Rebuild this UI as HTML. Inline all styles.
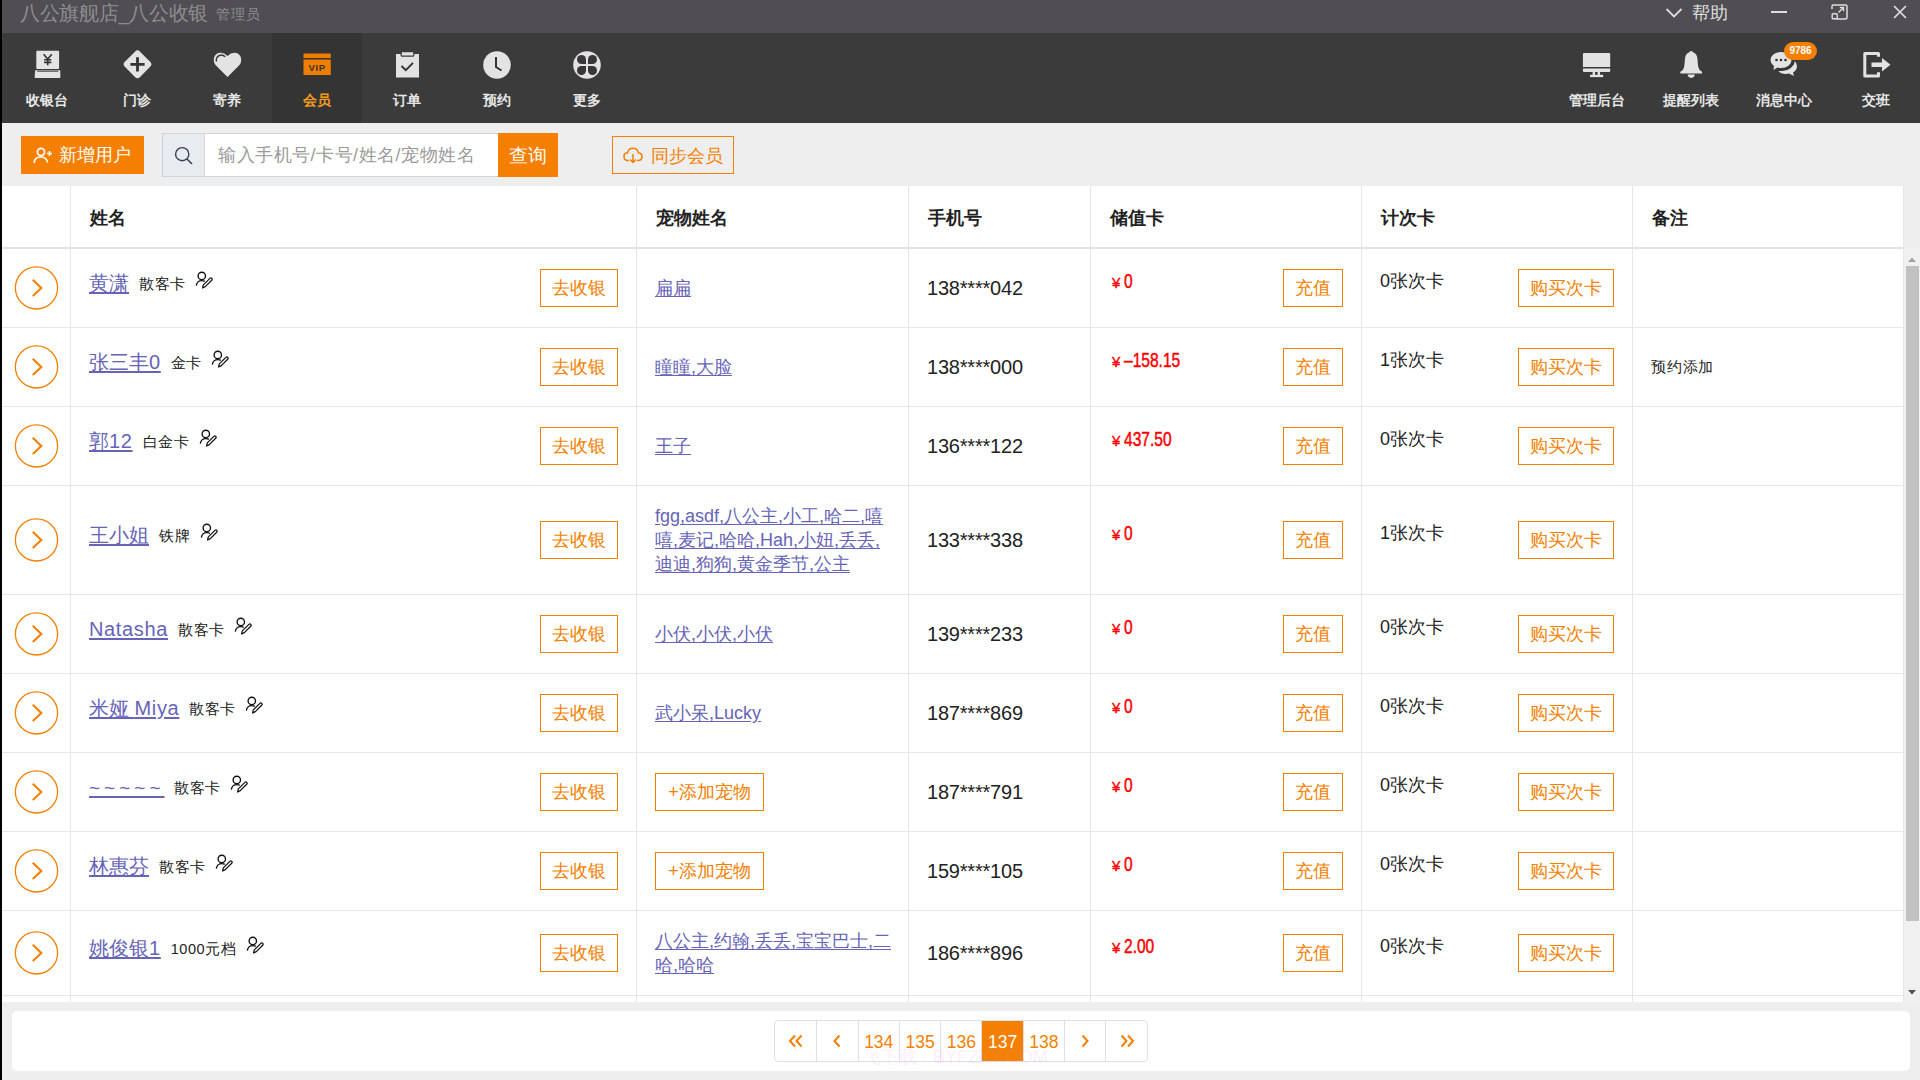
<!DOCTYPE html>
<html><head><meta charset="utf-8"><style>
*{box-sizing:border-box;margin:0;padding:0}
html,body{width:1920px;height:1080px;overflow:hidden;background:#eeeeee;font-family:"Liberation Sans",sans-serif;position:relative}
.abs{position:absolute}
#lb{position:absolute;left:0;top:0;width:2px;height:1080px;background:#000;z-index:10}
#title{position:absolute;left:0;top:0;width:1920px;height:33px;background:#504d53}
#title .t1{position:absolute;left:20px;top:2px;font-size:20px;line-height:22px;color:#8d8d8f;white-space:nowrap;letter-spacing:-0.3px}
#title .t2{position:absolute;left:216px;top:6px;font-size:14px;line-height:16px;color:#8d8d8f;letter-spacing:1px}
#nav{position:absolute;left:0;top:33px;width:1920px;height:90px;background:#3b3b3b}
.nav-item{position:absolute;top:0;width:90px;height:90px}
.nav-item.active{background:#343434}
.nic{position:absolute;left:50%;top:17px;width:30px;height:30px;margin-left:-15px}
.nic svg{display:block}
.nlab{position:absolute;left:0;right:0;top:59px;text-align:center;font-size:14px;line-height:16px;font-weight:bold;color:#e6e6e6;white-space:nowrap}
.active .nlab{color:#f39a1e}
.badge{position:absolute;left:1784px;top:8.5px;width:33px;height:18.5px;border-radius:9px;background:#f47f00;color:#fff;font-size:10px;font-weight:bold;line-height:18.5px;text-align:center}
.tb-btn{position:absolute;top:136px;height:38px;background:#f47f00;color:#fff;font-size:18px;line-height:38px}
#search{position:absolute;left:162px;top:133px;width:336px;height:44px;background:#fff;border:1px solid #cfd4dc;border-right:none}
#search .ic{position:absolute;left:0;top:0;width:42px;height:42px;background:#e8ebef;border-right:1px solid #d3d8de}
#search .ph{position:absolute;left:55px;top:10px;font-size:18px;line-height:22px;color:#9a9a9a;white-space:nowrap;letter-spacing:0.5px}
#qbtn{position:absolute;left:498px;top:133px;width:60px;height:44px;background:#f47f00;color:#fff;font-size:18.5px;line-height:46px;text-align:center}
#sync{position:absolute;left:612px;top:136px;width:122px;height:38px;border:1px solid #f47f00;color:#f47f00;font-size:18px;line-height:36px}
#table{position:absolute;left:2px;top:186px;width:1902px;height:816px;background:#fff;overflow:hidden;border-right:1px solid #e3e6eb}
#thead{position:absolute;left:0;top:0;width:1901px;height:63px;border-bottom:2px solid #dfe3e8}
.th{position:absolute;top:21px;margin-left:1px;font-size:18px;line-height:22px;font-weight:bold;color:#222}
.vl{position:absolute;top:0;width:1px;height:816px;background:#e3e6eb}
#tbody{position:absolute;left:0;top:63px;width:1901px;height:753px}
.row{position:absolute;left:0;width:1901px;border-bottom:1px solid #e3e6eb}
.circ{position:absolute;left:0}
.nm{position:absolute;left:87px;height:38px;white-space:nowrap}
.lk{color:#6663b8;text-decoration:underline;text-underline-offset:2px}
.nmlink{font-size:20px;line-height:24px;position:relative;top:2px}
.lt{letter-spacing:0.65px}
.tilde{letter-spacing:4px;font-size:19px}
.card{font-size:14.5px;letter-spacing:0.5px;color:#222;margin-left:10px;position:relative;top:1px}
.pi{position:relative;top:-4px;margin-left:9.5px;vertical-align:middle}
.btn{position:absolute;height:38px;border:1px solid #f47f00;color:#f47f00;font-size:18px;line-height:36px;text-align:center;background:#fff}
.b1{left:538px;width:78px}
.b2{left:1281px;width:60px}
.b3{left:1516px;width:96px}
.addpet{left:653px;width:109px}
.pets{position:absolute;left:653px;font-size:18px;line-height:24px;white-space:nowrap}
.phone{position:absolute;left:925px;font-size:20px;line-height:24px;color:#222;letter-spacing:-0.2px}
.amt{position:absolute;left:1109px;height:38px;color:#f00;white-space:nowrap}
.yen{position:absolute;left:1px;top:6.3px;font-size:15px;line-height:15px;-webkit-text-stroke:0.35px #f00}
.num{position:absolute;left:12.5px;top:1.3px;font-size:21px;line-height:21px;-webkit-text-stroke:0.5px #f00;transform:scaleX(0.74);transform-origin:0 50%;white-space:nowrap}
.times{position:absolute;left:1378px;font-size:18px;line-height:24px;color:#222;white-space:nowrap}
.note{position:absolute;left:1649px;font-size:15px;line-height:24px;color:#222;letter-spacing:0.8px}
#sb{position:absolute;left:1904px;top:248px;width:16px;height:754px;background:#f0f0f0}
#sb .thumb{position:absolute;left:2px;top:18px;width:13px;height:655px;background:#c1c1c1}
#pgwrap{position:absolute;left:12px;top:1011px;width:1898px;height:60px;background:#fff;border-radius:5px}
#pager{position:absolute;left:774px;top:1020px;height:42px;border:1px solid #dcdfe6;border-radius:4px;display:flex;background:#fff;overflow:hidden}
#pager div{width:41.3px;height:40px;border-left:1px solid #dcdfe6;color:#f47f00;font-size:17.5px;line-height:42px;text-align:center}
#pager svg{vertical-align:middle;position:relative;top:-2px}
#wm{position:absolute;left:863px;top:1046px;font-size:18px;line-height:22px;color:rgba(240,150,240,0.18);white-space:nowrap;letter-spacing:0px}
#pager div:first-child{border-left:none}
#pager div.cur{background:#f47f00;color:#fff}
</style></head><body>
<div id="title"><div class="t1">八公旗舰店_八公收银</div><div class="t2">管理员</div>
<svg class="abs" style="left:1665px;top:7px" width="18" height="12" viewBox="0 0 18 12"><path d="M1.5 2 L9 9.5 L16.5 2" stroke="#dedede" stroke-width="1.8" fill="none"/></svg>
<div class="abs" style="left:1692px;top:3px;font-size:18px;line-height:20px;color:#dedede">帮助</div>
<div class="abs" style="left:1771px;top:11px;width:16px;height:2px;background:#dedede"></div>
<svg class="abs" style="left:1831px;top:4px" width="17" height="16" viewBox="0 0 17 16"><path d="M5 1 H14.5 Q16 1 16 2.5 V13.5 Q16 15 14.5 15 H5" stroke="#dedede" stroke-width="1.5" fill="none"/><path d="M1 5 V2.5 Q1 1 2.5 1 H5" stroke="#dedede" stroke-width="1.5" fill="none"/><rect x="1.2" y="9.8" width="5" height="5" rx="0.8" stroke="#dedede" stroke-width="1.4" fill="none"/><path d="M7.5 8.5 L12.5 3.5 M8.8 3.5 H12.5 V7.2" stroke="#dedede" stroke-width="1.4" fill="none"/></svg>
<svg class="abs" style="left:1893px;top:5px" width="14" height="14" viewBox="0 0 14 14"><path d="M1 1 L13 13 M13 1 L1 13" stroke="#dedede" stroke-width="1.7"/></svg>
</div>
<div id="nav">
<div class="nav-item" style="left:2px"><div class="nic"><svg width="30" height="30" viewBox="0 0 30 30"><rect x="4.3" y="0.8" width="22.8" height="18.2" rx="1" fill="#e3e3e3"/><path d="M11.6 4.3 L15.7 9 L19.8 4.3 M15.7 9 V15.3 M12.1 9.8 H19.3 M12.1 12.4 H19.3" stroke="#333" stroke-width="1.6" fill="none"/><path d="M3.2 20.2 H28.2 L28.4 27.2 Q28.4 28 27.6 28 H3.4 Q2.6 28 2.6 27.2 Z" fill="#e3e3e3"/><rect x="5.2" y="20.6" width="21" height="1.2" fill="#555"/></svg></div><div class="nlab">收银台</div></div>
<div class="nav-item" style="left:92px"><div class="nic"><svg width="30" height="30" viewBox="0 0 30 30"><rect x="4.75" y="3.55" width="21.5" height="21.5" rx="3.6" transform="rotate(45 15.5 14.3)" fill="#e3e3e3"/><path d="M15.5 7.2 V21.4 M8.4 14.3 H22.6" stroke="#333" stroke-width="2.8" fill="none"/></svg></div><div class="nlab">门诊</div></div>
<div class="nav-item" style="left:182px"><div class="nic"><svg width="30" height="30" viewBox="0 0 30 30"><path d="M15.5 26.9 L4 15.6 Q1.2 12.4 1.9 8.2 Q3 3.2 8 2.7 Q12 2.4 15.5 5.9 Q19 2.4 23 2.7 Q28 3.2 29.1 8.2 Q29.8 12.4 27 15.6 Z" fill="#e3e3e3"/><path d="M4.4 11.6 Q3.8 7.2 7.2 5.5 Q10.4 4.2 13.2 6.8" stroke="#383838" stroke-width="1.4" fill="none"/></svg></div><div class="nlab">寄养</div></div>
<div class="nav-item active" style="left:272px"><div class="nic"><svg width="30" height="30" viewBox="0 0 30 30"><rect x="1.5" y="3.5" width="27.3" height="4.5" rx="0.6" fill="#ef7d00"/><rect x="1.5" y="9.5" width="27.3" height="15.5" rx="0.6" fill="#ef7d00"/><text x="15.1" y="21" text-anchor="middle" font-family="Liberation Sans" font-size="9.5" font-weight="bold" fill="#3d3530" letter-spacing="0.6">VIP</text></svg></div><div class="nlab">会员</div></div>
<div class="nav-item" style="left:362px"><div class="nic"><svg width="30" height="30" viewBox="0 0 30 30"><rect x="4" y="4" width="23" height="23.5" fill="#e3e3e3"/><rect x="9.2" y="1.6" width="12.6" height="4.6" rx="0.8" fill="#e3e3e3" stroke="#3b3b3b" stroke-width="1.2"/><path d="M9.5 16 L13.8 20.2 L21 12.8" stroke="#333" stroke-width="1.9" fill="none"/></svg></div><div class="nlab">订单</div></div>
<div class="nav-item" style="left:452px"><div class="nic"><svg width="30" height="30" viewBox="0 0 30 30"><circle cx="15" cy="15" r="13.8" fill="#e3e3e3"/><path d="M14 7 V17 L19.5 20.5" stroke="#333" stroke-width="2" fill="none"/></svg></div><div class="nlab">预约</div></div>
<div class="nav-item" style="left:542px"><div class="nic"><svg width="30" height="30" viewBox="0 0 30 30"><circle cx="15" cy="15" r="13.8" fill="#e3e3e3"/><g fill="#3a363a"><path d="M14 14 H9.5 A4.5 4.5 0 1 1 14 9.5 Z"/><path d="M16 14 H20.5 A4.5 4.5 0 1 0 16 9.5 Z"/><path d="M14 16 H9.5 A4.5 4.5 0 1 0 14 20.5 Z"/><path d="M16 16 H20.5 A4.5 4.5 0 1 1 16 20.5 Z"/></g></svg></div><div class="nlab">更多</div></div>
<div class="nav-item" style="left:1550.5px;width:93px"><div class="nic"><svg width="30" height="30" viewBox="0 0 30 30"><path d="M0.9 4 Q0.9 2.9 2 2.9 H27.1 Q28.2 2.9 28.2 4 V17 H0.9 Z" fill="#e3e3e3"/><path d="M0.9 18.6 H28.2 V21 Q28.2 22 27.1 22 H2 Q0.9 22 0.9 21 Z" fill="#e3e3e3"/><rect x="10.6" y="22" width="2.4" height="3" fill="#e3e3e3"/><rect x="15.6" y="22" width="2.4" height="3" fill="#e3e3e3"/><rect x="8" y="24.8" width="13.2" height="2.3" fill="#e3e3e3"/></svg></div><div class="nlab">管理后台</div></div>
<div class="nav-item" style="left:1644.0px;width:93px"><div class="nic"><svg width="30" height="30" viewBox="0 0 30 30"><circle cx="15.2" cy="2.9" r="1.9" fill="#e3e3e3"/><path d="M15.2 2 Q9.6 2 8.9 9 Q8.6 16 7.6 18.6 Q6.6 20.8 4.3 21.8 V23.6 H26.1 V21.8 Q23.8 20.8 22.8 18.6 Q21.8 16 21.5 9 Q20.8 2 15.2 2 Z" fill="#e3e3e3"/><path d="M11.6 24.6 Q12 27.9 15.2 27.9 Q18.4 27.9 18.8 24.6 Z" fill="#e3e3e3"/></svg></div><div class="nlab">提醒列表</div></div>
<div class="nav-item" style="left:1737.0px;width:93px"><div class="nic"><svg width="30" height="30" viewBox="0 0 30 30"><ellipse cx="12" cy="10" rx="10.5" ry="8" fill="#e3e3e3"/><path d="M5 15 L4.5 20 L10 16.5 Z" fill="#e3e3e3"/><path d="M25 10.5 Q28 13 28 16 Q28 20 24 22.5 L25 26 L20 23.6 Q18.5 24 17 24 Q11.5 24 9 20.5 Q18 21 22 17 Q25 14 25 10.5 Z" fill="#e3e3e3"/><path d="M9 20 Q17.5 21.2 22.3 16.6 Q25.2 13.6 25.2 10.2" stroke="#333" stroke-width="1.4" fill="none"/><circle cx="7.5" cy="10" r="1.3" fill="#333"/><circle cx="12" cy="10" r="1.3" fill="#333"/><circle cx="16.5" cy="10" r="1.3" fill="#333"/></svg></div><div class="nlab">消息中心</div></div>
<div class="nav-item" style="left:1829.0px;width:93px"><div class="nic"><svg width="30" height="30" viewBox="0 0 30 30"><path d="M17.5 6.8 V3.5 H3.8 V26 H17.5 V22.2" stroke="#e3e3e3" stroke-width="3" fill="none" stroke-linejoin="round"/><path d="M10.5 12.6 H21 V8 L29.5 14.8 L21 21.6 V17 H10.5 Z" fill="#e3e3e3"/></svg></div><div class="nlab">交班</div></div>
<div class="badge">9786</div>
</div>
<div class="tb-btn" style="left:21px;width:123px"><svg class="abs" style="left:12px;top:11px" width="20" height="17" viewBox="0 0 20 17"><circle cx="8" cy="5" r="3.6" stroke="#fff" stroke-width="1.7" fill="none"/><path d="M1.2 16 Q1.2 10 8 10 Q13.5 10 14.6 15.5" stroke="#fff" stroke-width="1.7" fill="none"/><path d="M14 6.5 H19 M16.5 4 V9" stroke="#fff" stroke-width="1.5"/></svg><span class="abs" style="left:38px;top:0">新增用户</span></div>
<div id="search"><div class="ic"><svg class="abs" style="left:10.5px;top:12px" width="20" height="20" viewBox="0 0 20 20"><circle cx="8.2" cy="8.2" r="6.6" stroke="#34405a" stroke-width="1.4" fill="none"/><path d="M13 13 L18 18" stroke="#34405a" stroke-width="1.6"/></svg></div><div class="ph">输入手机号/卡号/姓名/宠物姓名</div></div>
<div id="qbtn">查询</div>
<div id="sync"><svg class="abs" style="left:10px;top:10px" width="20" height="17" viewBox="0 0 20 17"><path d="M6 13.5 H5 Q1 13.5 1 9.5 Q1 6 4.5 5.8 Q5.5 1.2 10 1.2 Q14.5 1.2 15.3 5.8 Q19 6 19 9.8 Q19 13.5 15 13.5 H14" stroke="#f47f00" stroke-width="1.5" fill="none"/><path d="M10 7 V15.5 M7 12.5 L10 15.5 L13 12.5" stroke="#f47f00" stroke-width="1.5" fill="none"/></svg><span class="abs" style="left:38px;top:1px">同步会员</span></div>
<div id="table">
<div id="thead">
<div class="th" style="left:87px">姓名</div>
<div class="th" style="left:653px">宠物姓名</div>
<div class="th" style="left:925px">手机号</div>
<div class="th" style="left:1107px">储值卡</div>
<div class="th" style="left:1378px">计次卡</div>
<div class="th" style="left:1649px">备注</div>
</div>
<div id="tbody">
<div class="row" style="top:0px;height:79px">
<svg class="circ" style="top:9px" width="60" height="60" viewBox="0 0 60 60"><circle cx="34.5" cy="29.9" r="21.1" fill="none" stroke="#f47f00" stroke-width="1.3"/><path d="M30.8 21.8 L39.3 30 L30.8 38" fill="none" stroke="#f47f00" stroke-width="2.1"/></svg>
<div class="nm" style="top:20.0px"><a class="lk nmlink">黄潇</a><span class="card">散客卡</span><svg class="pi" width="18" height="18" viewBox="0 0 18 18"><circle cx="6.8" cy="4.9" r="3.7" fill="none" stroke="#111" stroke-width="1.35"/><path d="M1.3 14.6 C1.8 11.2 4 9.6 6.8 9.6 C8 9.6 9 9.9 9.8 10.4" fill="none" stroke="#111" stroke-width="1.35"/><path d="M7.6 17 L8.3 13.9 L14.9 7.4 Q15.9 6.5 16.8 7.4 Q17.6 8.3 16.7 9.2 L10.3 15.6 Z" fill="none" stroke="#111" stroke-width="1.25" stroke-linejoin="round"/></svg></div>
<div class="btn b1" style="top:20.0px">去收银</div>
<div class="pets" style="top:27.0px"><a class="lk">扁扁</a></div>
<div class="phone" style="top:27.0px">138****042</div>
<div class="amt" style="top:20.0px"><span class="yen">¥</span><span class="num">0</span></div>
<div class="btn b2" style="top:20.0px">充值</div>
<div class="times" style="top:20.0px">0张次卡</div>
<div class="btn b3" style="top:20.0px">购买次卡</div>
</div>
<div class="row" style="top:79px;height:79px">
<svg class="circ" style="top:9px" width="60" height="60" viewBox="0 0 60 60"><circle cx="34.5" cy="29.9" r="21.1" fill="none" stroke="#f47f00" stroke-width="1.3"/><path d="M30.8 21.8 L39.3 30 L30.8 38" fill="none" stroke="#f47f00" stroke-width="2.1"/></svg>
<div class="nm" style="top:20.0px"><a class="lk nmlink">张三丰<span class="lt">0</span></a><span class="card">金卡</span><svg class="pi" width="18" height="18" viewBox="0 0 18 18"><circle cx="6.8" cy="4.9" r="3.7" fill="none" stroke="#111" stroke-width="1.35"/><path d="M1.3 14.6 C1.8 11.2 4 9.6 6.8 9.6 C8 9.6 9 9.9 9.8 10.4" fill="none" stroke="#111" stroke-width="1.35"/><path d="M7.6 17 L8.3 13.9 L14.9 7.4 Q15.9 6.5 16.8 7.4 Q17.6 8.3 16.7 9.2 L10.3 15.6 Z" fill="none" stroke="#111" stroke-width="1.25" stroke-linejoin="round"/></svg></div>
<div class="btn b1" style="top:20.0px">去收银</div>
<div class="pets" style="top:27.0px"><a class="lk">瞳瞳,大脸</a></div>
<div class="phone" style="top:27.0px">138****000</div>
<div class="amt" style="top:20.0px"><span class="yen">¥</span><span class="num">–158.15</span></div>
<div class="btn b2" style="top:20.0px">充值</div>
<div class="times" style="top:20.0px">1张次卡</div>
<div class="btn b3" style="top:20.0px">购买次卡</div>
<div class="note" style="top:27.0px">预约添加</div>
</div>
<div class="row" style="top:158px;height:79px">
<svg class="circ" style="top:9px" width="60" height="60" viewBox="0 0 60 60"><circle cx="34.5" cy="29.9" r="21.1" fill="none" stroke="#f47f00" stroke-width="1.3"/><path d="M30.8 21.8 L39.3 30 L30.8 38" fill="none" stroke="#f47f00" stroke-width="2.1"/></svg>
<div class="nm" style="top:20.0px"><a class="lk nmlink">郭<span class="lt">12</span></a><span class="card">白金卡</span><svg class="pi" width="18" height="18" viewBox="0 0 18 18"><circle cx="6.8" cy="4.9" r="3.7" fill="none" stroke="#111" stroke-width="1.35"/><path d="M1.3 14.6 C1.8 11.2 4 9.6 6.8 9.6 C8 9.6 9 9.9 9.8 10.4" fill="none" stroke="#111" stroke-width="1.35"/><path d="M7.6 17 L8.3 13.9 L14.9 7.4 Q15.9 6.5 16.8 7.4 Q17.6 8.3 16.7 9.2 L10.3 15.6 Z" fill="none" stroke="#111" stroke-width="1.25" stroke-linejoin="round"/></svg></div>
<div class="btn b1" style="top:20.0px">去收银</div>
<div class="pets" style="top:27.0px"><a class="lk">王子</a></div>
<div class="phone" style="top:27.0px">136****122</div>
<div class="amt" style="top:20.0px"><span class="yen">¥</span><span class="num">437.50</span></div>
<div class="btn b2" style="top:20.0px">充值</div>
<div class="times" style="top:20.0px">0张次卡</div>
<div class="btn b3" style="top:20.0px">购买次卡</div>
</div>
<div class="row" style="top:237px;height:109px">
<svg class="circ" style="top:24px" width="60" height="60" viewBox="0 0 60 60"><circle cx="34.5" cy="29.9" r="21.1" fill="none" stroke="#f47f00" stroke-width="1.3"/><path d="M30.8 21.8 L39.3 30 L30.8 38" fill="none" stroke="#f47f00" stroke-width="2.1"/></svg>
<div class="nm" style="top:35.0px"><a class="lk nmlink">王小姐</a><span class="card">铁牌</span><svg class="pi" width="18" height="18" viewBox="0 0 18 18"><circle cx="6.8" cy="4.9" r="3.7" fill="none" stroke="#111" stroke-width="1.35"/><path d="M1.3 14.6 C1.8 11.2 4 9.6 6.8 9.6 C8 9.6 9 9.9 9.8 10.4" fill="none" stroke="#111" stroke-width="1.35"/><path d="M7.6 17 L8.3 13.9 L14.9 7.4 Q15.9 6.5 16.8 7.4 Q17.6 8.3 16.7 9.2 L10.3 15.6 Z" fill="none" stroke="#111" stroke-width="1.25" stroke-linejoin="round"/></svg></div>
<div class="btn b1" style="top:35.0px">去收银</div>
<div class="pets" style="top:18.0px"><a class="lk">fgg,asdf,八公主,小工,哈二,嘻</a><br><a class="lk">嘻,麦记,哈哈,Hah,小妞,丢丢,</a><br><a class="lk">迪迪,狗狗,黄金季节,公主</a></div>
<div class="phone" style="top:42.0px">133****338</div>
<div class="amt" style="top:35.0px"><span class="yen">¥</span><span class="num">0</span></div>
<div class="btn b2" style="top:35.0px">充值</div>
<div class="times" style="top:35.0px">1张次卡</div>
<div class="btn b3" style="top:35.0px">购买次卡</div>
</div>
<div class="row" style="top:346px;height:79px">
<svg class="circ" style="top:9px" width="60" height="60" viewBox="0 0 60 60"><circle cx="34.5" cy="29.9" r="21.1" fill="none" stroke="#f47f00" stroke-width="1.3"/><path d="M30.8 21.8 L39.3 30 L30.8 38" fill="none" stroke="#f47f00" stroke-width="2.1"/></svg>
<div class="nm" style="top:20.0px"><a class="lk nmlink"><span class="lt">Natasha</span></a><span class="card">散客卡</span><svg class="pi" width="18" height="18" viewBox="0 0 18 18"><circle cx="6.8" cy="4.9" r="3.7" fill="none" stroke="#111" stroke-width="1.35"/><path d="M1.3 14.6 C1.8 11.2 4 9.6 6.8 9.6 C8 9.6 9 9.9 9.8 10.4" fill="none" stroke="#111" stroke-width="1.35"/><path d="M7.6 17 L8.3 13.9 L14.9 7.4 Q15.9 6.5 16.8 7.4 Q17.6 8.3 16.7 9.2 L10.3 15.6 Z" fill="none" stroke="#111" stroke-width="1.25" stroke-linejoin="round"/></svg></div>
<div class="btn b1" style="top:20.0px">去收银</div>
<div class="pets" style="top:27.0px"><a class="lk">小伏,小伏,小伏</a></div>
<div class="phone" style="top:27.0px">139****233</div>
<div class="amt" style="top:20.0px"><span class="yen">¥</span><span class="num">0</span></div>
<div class="btn b2" style="top:20.0px">充值</div>
<div class="times" style="top:20.0px">0张次卡</div>
<div class="btn b3" style="top:20.0px">购买次卡</div>
</div>
<div class="row" style="top:425px;height:79px">
<svg class="circ" style="top:9px" width="60" height="60" viewBox="0 0 60 60"><circle cx="34.5" cy="29.9" r="21.1" fill="none" stroke="#f47f00" stroke-width="1.3"/><path d="M30.8 21.8 L39.3 30 L30.8 38" fill="none" stroke="#f47f00" stroke-width="2.1"/></svg>
<div class="nm" style="top:20.0px"><a class="lk nmlink">米娅 <span class="lt">Miya</span></a><span class="card">散客卡</span><svg class="pi" width="18" height="18" viewBox="0 0 18 18"><circle cx="6.8" cy="4.9" r="3.7" fill="none" stroke="#111" stroke-width="1.35"/><path d="M1.3 14.6 C1.8 11.2 4 9.6 6.8 9.6 C8 9.6 9 9.9 9.8 10.4" fill="none" stroke="#111" stroke-width="1.35"/><path d="M7.6 17 L8.3 13.9 L14.9 7.4 Q15.9 6.5 16.8 7.4 Q17.6 8.3 16.7 9.2 L10.3 15.6 Z" fill="none" stroke="#111" stroke-width="1.25" stroke-linejoin="round"/></svg></div>
<div class="btn b1" style="top:20.0px">去收银</div>
<div class="pets" style="top:27.0px"><a class="lk">武小呆,Lucky</a></div>
<div class="phone" style="top:27.0px">187****869</div>
<div class="amt" style="top:20.0px"><span class="yen">¥</span><span class="num">0</span></div>
<div class="btn b2" style="top:20.0px">充值</div>
<div class="times" style="top:20.0px">0张次卡</div>
<div class="btn b3" style="top:20.0px">购买次卡</div>
</div>
<div class="row" style="top:504px;height:79px">
<svg class="circ" style="top:9px" width="60" height="60" viewBox="0 0 60 60"><circle cx="34.5" cy="29.9" r="21.1" fill="none" stroke="#f47f00" stroke-width="1.3"/><path d="M30.8 21.8 L39.3 30 L30.8 38" fill="none" stroke="#f47f00" stroke-width="2.1"/></svg>
<div class="nm" style="top:20.0px"><a class="lk nmlink"><span class="tilde">~~~~~</span></a><span class="card">散客卡</span><svg class="pi" width="18" height="18" viewBox="0 0 18 18"><circle cx="6.8" cy="4.9" r="3.7" fill="none" stroke="#111" stroke-width="1.35"/><path d="M1.3 14.6 C1.8 11.2 4 9.6 6.8 9.6 C8 9.6 9 9.9 9.8 10.4" fill="none" stroke="#111" stroke-width="1.35"/><path d="M7.6 17 L8.3 13.9 L14.9 7.4 Q15.9 6.5 16.8 7.4 Q17.6 8.3 16.7 9.2 L10.3 15.6 Z" fill="none" stroke="#111" stroke-width="1.25" stroke-linejoin="round"/></svg></div>
<div class="btn b1" style="top:20.0px">去收银</div>
<div class="btn addpet" style="top:20.0px">+添加宠物</div>
<div class="phone" style="top:27.0px">187****791</div>
<div class="amt" style="top:20.0px"><span class="yen">¥</span><span class="num">0</span></div>
<div class="btn b2" style="top:20.0px">充值</div>
<div class="times" style="top:20.0px">0张次卡</div>
<div class="btn b3" style="top:20.0px">购买次卡</div>
</div>
<div class="row" style="top:583px;height:79px">
<svg class="circ" style="top:9px" width="60" height="60" viewBox="0 0 60 60"><circle cx="34.5" cy="29.9" r="21.1" fill="none" stroke="#f47f00" stroke-width="1.3"/><path d="M30.8 21.8 L39.3 30 L30.8 38" fill="none" stroke="#f47f00" stroke-width="2.1"/></svg>
<div class="nm" style="top:20.0px"><a class="lk nmlink">林惠芬</a><span class="card">散客卡</span><svg class="pi" width="18" height="18" viewBox="0 0 18 18"><circle cx="6.8" cy="4.9" r="3.7" fill="none" stroke="#111" stroke-width="1.35"/><path d="M1.3 14.6 C1.8 11.2 4 9.6 6.8 9.6 C8 9.6 9 9.9 9.8 10.4" fill="none" stroke="#111" stroke-width="1.35"/><path d="M7.6 17 L8.3 13.9 L14.9 7.4 Q15.9 6.5 16.8 7.4 Q17.6 8.3 16.7 9.2 L10.3 15.6 Z" fill="none" stroke="#111" stroke-width="1.25" stroke-linejoin="round"/></svg></div>
<div class="btn b1" style="top:20.0px">去收银</div>
<div class="btn addpet" style="top:20.0px">+添加宠物</div>
<div class="phone" style="top:27.0px">159****105</div>
<div class="amt" style="top:20.0px"><span class="yen">¥</span><span class="num">0</span></div>
<div class="btn b2" style="top:20.0px">充值</div>
<div class="times" style="top:20.0px">0张次卡</div>
<div class="btn b3" style="top:20.0px">购买次卡</div>
</div>
<div class="row" style="top:662px;height:85px">
<svg class="circ" style="top:12px" width="60" height="60" viewBox="0 0 60 60"><circle cx="34.5" cy="29.9" r="21.1" fill="none" stroke="#f47f00" stroke-width="1.3"/><path d="M30.8 21.8 L39.3 30 L30.8 38" fill="none" stroke="#f47f00" stroke-width="2.1"/></svg>
<div class="nm" style="top:23.0px"><a class="lk nmlink">姚俊银<span class="lt">1</span></a><span class="card">1000元档</span><svg class="pi" width="18" height="18" viewBox="0 0 18 18"><circle cx="6.8" cy="4.9" r="3.7" fill="none" stroke="#111" stroke-width="1.35"/><path d="M1.3 14.6 C1.8 11.2 4 9.6 6.8 9.6 C8 9.6 9 9.9 9.8 10.4" fill="none" stroke="#111" stroke-width="1.35"/><path d="M7.6 17 L8.3 13.9 L14.9 7.4 Q15.9 6.5 16.8 7.4 Q17.6 8.3 16.7 9.2 L10.3 15.6 Z" fill="none" stroke="#111" stroke-width="1.25" stroke-linejoin="round"/></svg></div>
<div class="btn b1" style="top:23.0px">去收银</div>
<div class="pets" style="top:18.0px"><a class="lk">八公主,约翰,丢丢,宝宝巴士,二</a><br><a class="lk">哈,哈哈</a></div>
<div class="phone" style="top:30.0px">186****896</div>
<div class="amt" style="top:23.0px"><span class="yen">¥</span><span class="num">2.00</span></div>
<div class="btn b2" style="top:23.0px">充值</div>
<div class="times" style="top:23.0px">0张次卡</div>
<div class="btn b3" style="top:23.0px">购买次卡</div>
</div>
<div class="row" style="top:747px;height:80px"></div>
</div>
<div class="vl" style="left:68px"></div>
<div class="vl" style="left:634px"></div>
<div class="vl" style="left:906px"></div>
<div class="vl" style="left:1088px"></div>
<div class="vl" style="left:1359px"></div>
<div class="vl" style="left:1630px"></div>
</div>
<div id="sb"><svg class="abs" style="left:4px;top:9px" width="8" height="5" viewBox="0 0 8 5"><path d="M0 5 L4 0.5 L8 5 Z" fill="#a3a3a3"/></svg><div class="thumb"></div><svg class="abs" style="left:4px;top:742px" width="8" height="5" viewBox="0 0 8 5"><path d="M0 0 L4 4.5 L8 0 Z" fill="#505050"/></svg></div>
<div id="pgwrap"></div>
<div id="pager"><div class=""><svg width="16" height="14" viewBox="0 0 16 14"><path d="M7 1.5 L2 7 L7 12.5 M13.5 1.5 L8.5 7 L13.5 12.5" stroke="#f47f00" stroke-width="2" fill="none"/></svg></div><div class=""><svg width="10" height="14" viewBox="0 0 10 14"><path d="M7.5 1.5 L2.5 7 L7.5 12.5" stroke="#f47f00" stroke-width="2" fill="none"/></svg></div><div class="">134</div><div class="">135</div><div class="">136</div><div class="cur">137</div><div class="">138</div><div class=""><svg width="10" height="14" viewBox="0 0 10 14"><path d="M2.5 1.5 L7.5 7 L2.5 12.5" stroke="#f47f00" stroke-width="2" fill="none"/></svg></div><div class=""><svg width="16" height="14" viewBox="0 0 16 14"><path d="M2.5 1.5 L7.5 7 L2.5 12.5 M9 1.5 L14 7 L9 12.5" stroke="#f47f00" stroke-width="2" fill="none"/></svg></div></div>
<div id="wm">飞下载 · BYFZXY.COM</div>
<div id="lb"></div>
</body></html>
